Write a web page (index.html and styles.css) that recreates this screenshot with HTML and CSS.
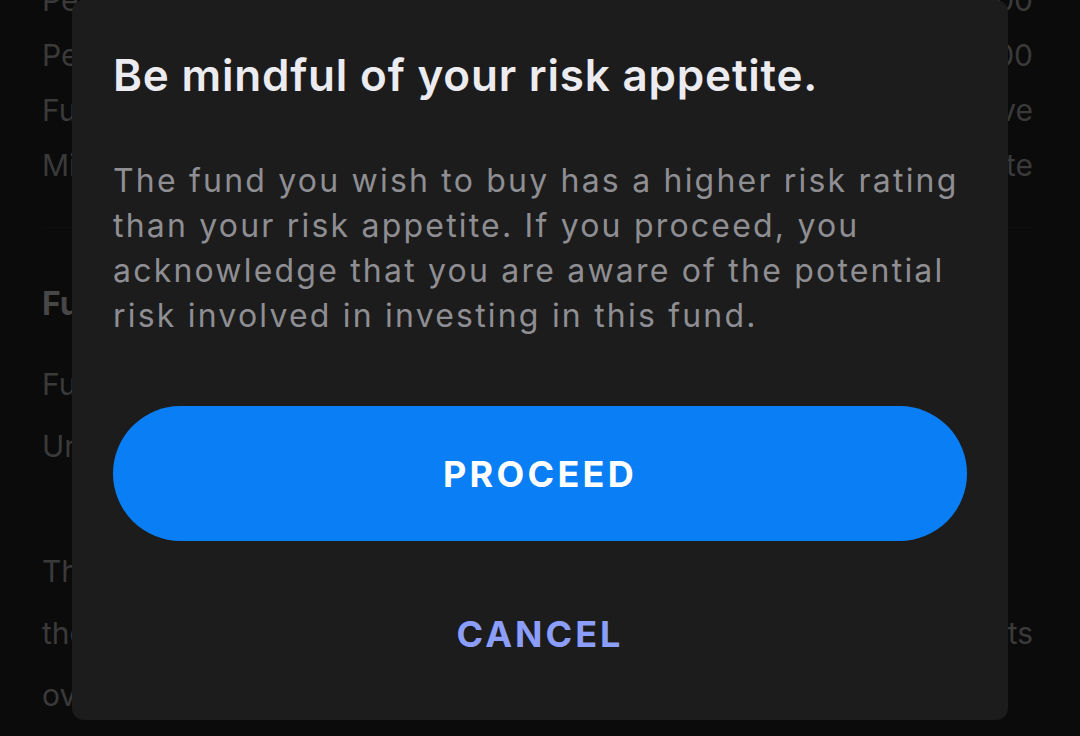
FILE: index.html
```html
<!DOCTYPE html>
<html lang="en">
<head>
<meta charset="utf-8">
<title>Risk appetite</title>
<link rel="stylesheet" href="styles.css">
</head>
<body>
<div class="page">
  <section class="summary">
    <div class="row"><span>Performance fee</span><span>RM 250.00</span></div>
    <div class="row"><span>Penalty fee</span><span>RM 0.00</span></div>
    <div class="row"><span>Fund status</span><span>Active</span></div>
    <div class="row"><span>Minimum rating</span><span>Moderate</span></div>
  </section>
  <section class="details">
    <h2 class="heading">Fund information</h2>
    <div class="row2"><span>Fund manager: Aurora Capital</span></div>
    <div class="row2"><span>Unit price: RM 1.0254</span></div>
  </section>
  <p class="para">
    <span class="line">The fund aims to provide steady income and growth</span>
    <span class="line just">the medium to long term by investing in a basket of assets</span>
    <span class="line">over a diversified portfolio.</span>
  </p>
</div>

<div class="modal" role="dialog">
  <h1 class="title">Be mindful of your risk appetite.</h1>
  <p class="body">The fund you wish to buy has a higher risk rating<br>than your risk appetite. If you proceed, you<br>acknowledge that you are aware of the potential<br>risk involved in investing in this fund.</p>
  <button class="btn-primary">PROCEED</button>
  <button class="btn-text">CANCEL</button>
</div>
</body>
</html>
```

FILE: styles.css
```css
html, body {
  margin: 0;
  padding: 0;
  background: #0b0b0b;
  width: 1080px;
  height: 736px;
  overflow: hidden;
}

body {
  position: relative;
  font-family: "Inter", "Noto Sans", sans-serif;
}

.page {
  margin-top: -28px;
  padding: 0 47px 0 42px;
  color: #3a3a3a;
  font-size: 30px;
}

.summary {
  border-bottom: 1px solid #0f0f0f;
  padding-bottom: 35px;
}

.row {
  height: 55px;
  display: flex;
  align-items: center;
  justify-content: space-between;
}

.details {
  padding-top: 51px;
}

.heading {
  margin: 0 0 24px;
  height: 50px;
  line-height: 50px;
  font-size: 32px;
  font-weight: 700;
  color: #474747;
}

.row2 {
  height: 62px;
  display: flex;
  align-items: center;
  justify-content: space-between;
}

.para {
  margin: 63px 0 0;
  line-height: 62px;
  white-space: nowrap;
}

.line {
  display: block;
}

.just {
  text-align: justify;
  text-align-last: justify;
}

.modal {
  position: absolute;
  left: 72px;
  top: 0;
  width: 936px;
  height: 720px;
  box-sizing: border-box;
  padding: 0 41px;
  background: #1c1c1c;
  border-radius: 12px;
  display: flex;
  flex-direction: column;
}

.title {
  margin: 47px 0 0;
  font-size: 44px;
  line-height: 56px;
  font-weight: 600;
  letter-spacing: 0.8px;
  color: #ebebf0;
  white-space: nowrap;
}

.body {
  margin: 55px 0 0;
  font-size: 32px;
  line-height: 45px;
  letter-spacing: 2.2px;
  color: #8e8e93;
  white-space: nowrap;
}

.btn-primary {
  margin-top: 68px;
  height: 135px;
  border: 0;
  border-radius: 68px;
  background: #0a7ff5;
  color: #ffffff;
  font-family: "Inter", "Noto Sans", sans-serif;
  font-size: 36px;
  font-weight: 700;
  letter-spacing: 3.3px;
}

.btn-text {
  margin-top: 53px;
  height: 80px;
  border: 0;
  background: transparent;
  color: #8c9efc;
  font-family: "Inter", "Noto Sans", sans-serif;
  font-size: 36px;
  font-weight: 700;
  letter-spacing: 3px;
}
```
